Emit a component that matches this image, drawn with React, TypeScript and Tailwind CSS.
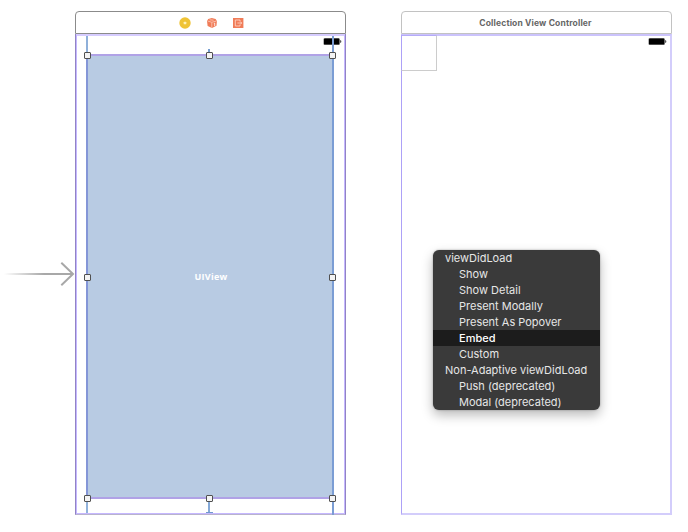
import React from "react";

const menuItems = [
  { label: "viewDidLoad", heading: true },
  { label: "Show" },
  { label: "Show Detail" },
  { label: "Present Modally" },
  { label: "Present As Popover" },
  { label: "Embed", selected: true },
  { label: "Custom" },
  { label: "Non-Adaptive viewDidLoad", heading: true },
  { label: "Push (deprecated)" },
  { label: "Modal (deprecated)" },
];

function Battery() {
  return (
    <svg width="19" height="7" viewBox="0 0 19 7" className="block">
      <rect x="0.3" y="0" width="16.7" height="7" rx="1.5" fill="#999" />
      <rect x="1" y="0.4" width="15.3" height="6.2" rx="0.7" fill="#000" />
      <path d="M17.2 2.2h.8q.7 1.3 0 2.6h-.8z" fill="#333" />
    </svg>
  );
}

function Handle({ place }: { place: string }) {
  return (
    <span
      className={`absolute size-[7px] rounded-[1px] border border-[#505050] bg-[#f4f4f4] ${place}`}
    />
  );
}

function EntryArrow() {
  return (
    <svg width="75" height="32" viewBox="0 0 75 32" className="mt-[247px] block" fill="none">
      <defs>
        <linearGradient id="shaft" x1="4" y1="0" x2="44" y2="0" gradientUnits="userSpaceOnUse">
          <stop stopColor="#a8a8a8" stopOpacity="0" />
          <stop offset="1" stopColor="#a8a8a8" />
        </linearGradient>
      </defs>
      <rect x="4" y="15" width="69" height="2" fill="url(#shaft)" />
      <path d="M61.3 4.7 73 16 61.3 27.3" stroke="#a8a8a8" strokeWidth="2" />
    </svg>
  );
}

function SceneIcons() {
  return (
    <div className="flex gap-[15px] pl-px">
      <svg width="12" height="12" viewBox="0 0 12 12">
        <circle cx="6" cy="6" r="5.7" fill="#efc335" />
        <rect x="4.7" y="4.7" width="2.6" height="2.6" rx="0.6" fill="#fff1b8" />
      </svg>
      <svg width="12" height="12" viewBox="0 0 12 12">
        <path d="M5.8 1 9.6 1.9 10.9 4 10.5 8.8 6 11 1.6 9 1 4l1.2-1.9z" fill="#f07c58" />
        <path d="M1.6 4 5.8 5.3 10.4 4M5.8 5.6V10.6M3.6 2.8l4 .4" stroke="#ffd9cb" strokeWidth="0.7" fill="none" />
        <path d="m7.8 6.6.9-.5v3" stroke="#fff" strokeWidth="0.8" fill="none" />
      </svg>
      <svg width="11" height="12" viewBox="0 0 11 12">
        <rect x="0" y="1" width="10.4" height="10" fill="#f07c58" />
        <path d="M7 4.2V3H2.3v6H7V7.8M4.4 6h4.3M7.2 4.5 8.7 6 7.2 7.5" stroke="#ffdccf" strokeWidth="0.8" fill="none" />
      </svg>
    </div>
  );
}

function ViewScene() {
  return (
    <section className="flex h-[504px] w-[271px] flex-col">
      <header className="flex h-[23px] items-center justify-center rounded-t-[4px] border border-[#8b8b8b]">
        <SceneIcons />
      </header>
      <div className="flex flex-1 flex-col border-x border-b border-x-[#9184c4] border-b-[#b9b3cd]">
        <div className="relative flex flex-1 flex-col border border-t-2 border-[#c5b7ff] border-t-[#d6ccff] pt-[18px] pr-[10px] pb-[14px] pl-[9px]">
          <div className="absolute top-[2px] right-[2px]">
            <Battery />
          </div>
          <div className="relative flex flex-1 items-center justify-center border-x-2 border-y-2 border-x-[#8496d7] border-y-[#b0a2e6] bg-[#b8cbe3]">
            <span className="pl-[2px] font-['Open_Sans',sans-serif] text-[9px] leading-none font-bold tracking-[0.3px] text-white">
              UIView
            </span>
            <span className="absolute -top-[20px] -left-[2px] h-[20px] w-[2px] bg-[#8fb0da]" />
            <span className="absolute -top-[20px] -right-[2px] h-[479px] w-[2px] bg-[#7b9dd4]" />
            <span className="absolute -bottom-[16px] -left-[2px] h-[15px] w-[2px] bg-[#91b2db]" />
            <span className="absolute -top-[7px] left-[120px] h-[5px] w-[2px] bg-[#779fd2]" />
            <span className="absolute -bottom-[16px] left-[120px] h-[15px] w-[2px] bg-[#85a9d7]" />
            <span className="absolute -bottom-[16px] left-[118px] h-px w-[7px] bg-[#7198cd]" />
            <Handle place="-top-[4px] -left-[4px]" />
            <Handle place="-top-[4px] left-[118px]" />
            <Handle place="-top-[4px] -right-[4px]" />
            <Handle place="top-[218px] -left-[4px]" />
            <Handle place="top-[218px] -right-[4px]" />
            <Handle place="-bottom-[5px] -left-[4px]" />
            <Handle place="-bottom-[5px] left-[118px]" />
            <Handle place="-bottom-[5px] -right-[4px]" />
          </div>
        </div>
      </div>
    </section>
  );
}

function SegueMenu() {
  return (
    <ul className="mt-[214px] ml-[31px] h-[160px] w-[167px] overflow-hidden rounded-[6px] bg-[#3a3a3a] shadow-[0_5px_12px_rgba(0,0,0,0.28),0_0_2px_rgba(0,0,0,0.35)]">
      {menuItems.map((item) => (
        <li
          key={item.label}
          className={`h-[16px] font-[Inter,sans-serif] text-[11px] leading-[16px] whitespace-nowrap ${
            item.heading ? "pl-[12px]" : "pl-[26px]"
          } ${item.selected ? "bg-[#1c1c1c] font-medium text-white" : "text-[#e6e6e6]"}`}
        >
          {item.label}
        </li>
      ))}
    </ul>
  );
}

function CollectionScene() {
  return (
    <section className="ml-[55px] flex h-[504px] w-[271px] flex-col">
      <header className="flex h-[23px] items-center justify-center rounded-t-[4px] border border-[#c2c2c2]">
        <h1 className="pt-[2px] pr-[2px] font-[Inter,sans-serif] text-[8.5px] leading-none font-bold tracking-[0.15px] whitespace-nowrap text-[#666]">
          Collection View Controller
        </h1>
      </header>
      <div className="relative flex-1 border-t-2 border-r-2 border-b-2 border-l border-t-[#cbc3fc] border-r-[#d3cdfb] border-b-[#d3cdfb] border-l-[#ada1f7]">
        <div className="absolute -top-px -left-px size-[36px] border border-t-[#b5abf8] border-r-[#ccc] border-b-[#ccc] border-l-[#ada1f7]" />
        <div className="absolute top-[2px] right-[3px]">
          <Battery />
        </div>
        <SegueMenu />
      </div>
    </section>
  );
}

export default function App() {
  return (
    <main className="flex h-[532px] w-[688px] items-start overflow-hidden bg-white pt-[11px]">
      <EntryArrow />
      <ViewScene />
      <CollectionScene />
    </main>
  );
}
